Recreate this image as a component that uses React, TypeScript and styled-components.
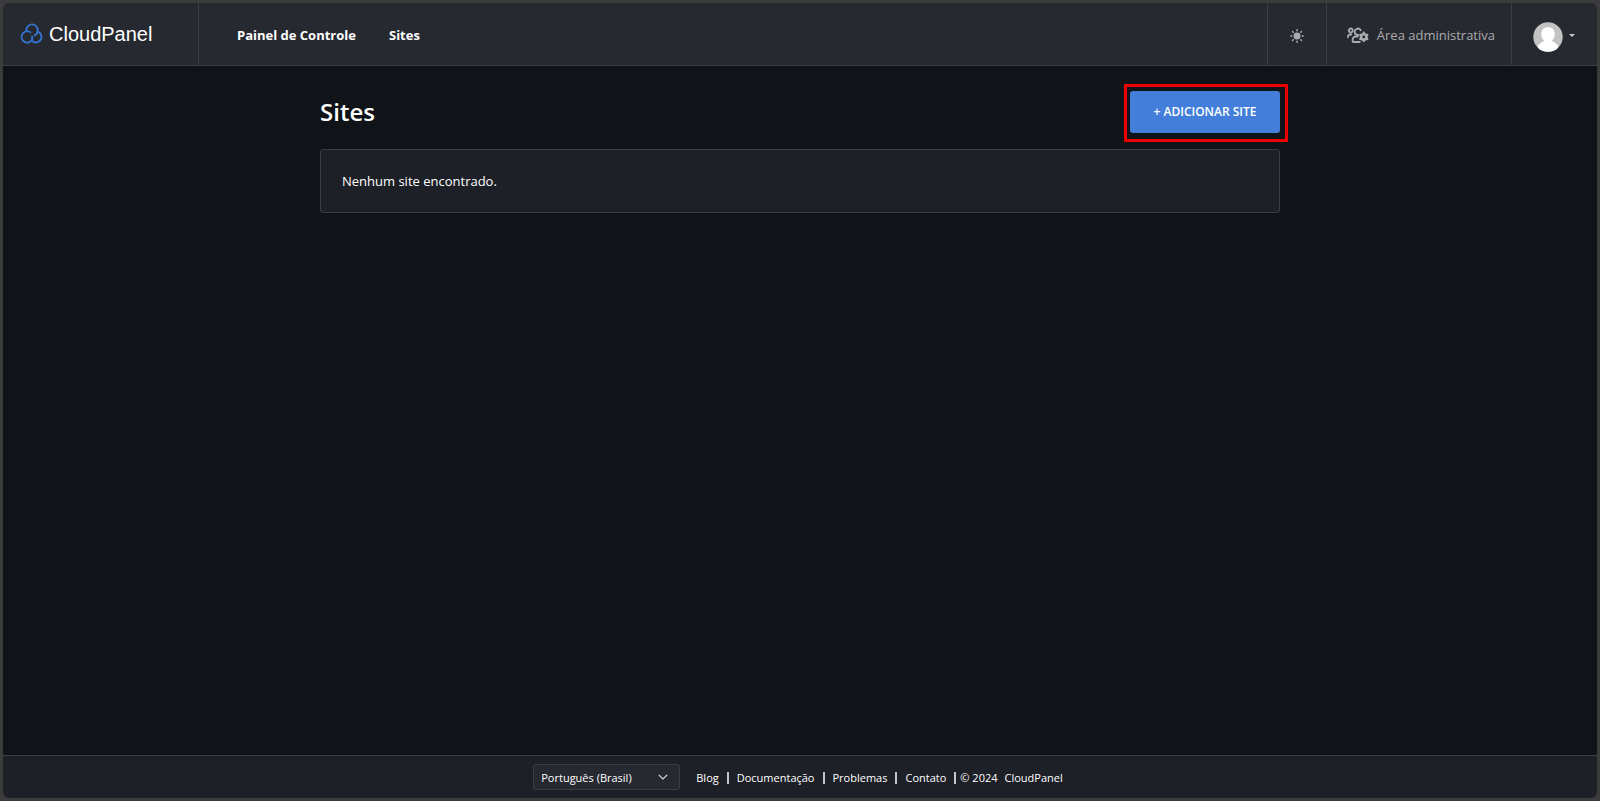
import React from 'react';
import styled, { createGlobalStyle } from 'styled-components';

const color = {
  frame: '#3c3c3c',
  page: '#101317',
  bar: '#272930',
  panel: '#1e2027',
  line: '#3b3e46',
  muted: '#a9abae',
  accent: '#437fda',
  highlight: '#ee0000',
};

const GlobalStyle = createGlobalStyle`
  *, *::before, *::after { box-sizing: border-box; }
  html, body { margin: 0; }
  body {
    background: ${color.frame};
    color: #fff;
    font-family: "Segoe UI", "Open Sans", "Noto Sans", sans-serif;
    font-size: 13px;
    line-height: 20px;
  }
  a { color: inherit; text-decoration: none; }
  h1 { margin: 0; }
`;

const Shell = styled.div`
  min-height: 100vh;
  padding: 3px;
  display: flex;
`;

const AppWindow = styled.div`
  flex: 1;
  display: flex;
  flex-direction: column;
  background: ${color.page};
  border-radius: 7px;
  overflow: hidden;
`;

const Header = styled.header`
  display: flex;
  height: 63px;
  background: ${color.bar};
  border-bottom: 1px solid ${color.line};
`;

const Brand = styled.a`
  display: flex;
  align-items: center;
  gap: 5px;
  width: 196px;
  padding: 0 0 0 17px;
  border-right: 1px solid ${color.line};
  font-family: Arial, "Liberation Sans", sans-serif;
  font-size: 20px;
`;

const Nav = styled.nav`
  flex: 1;
  display: flex;
  align-items: center;
  gap: 33px;
  padding: 2px 38px 0;
`;

const NavLink = styled.a`
  font-weight: 700;
`;

const headerCell = `
  display: flex;
  align-items: center;
  border: 0;
  border-left: 1px solid ${color.line};
  background: transparent;
  color: ${color.muted};
  font: inherit;
`;

const ThemeButton = styled.button`
  ${headerCell}
  justify-content: center;
  width: 59px;
  padding: 4px 0 0;
`;

const AdminLink = styled.a`
  ${headerCell}
  gap: 8px;
  padding: 2px 16px 0 20px;
`;

const UserButton = styled.button`
  ${headerCell}
  gap: 6px;
  width: 86px;
  padding: 5px 0 0 21px;
`;

const Main = styled.main`
  flex: 1;
  width: 100%;
  max-width: 960px;
  margin: 0 auto;
  padding: 25px 0;
`;

const TitleRow = styled.div`
  display: flex;
  align-items: center;
  justify-content: space-between;
  margin-bottom: 16px;
`;

const Title = styled.h1`
  font-size: 24px;
  line-height: 32px;
  font-weight: 600;
  padding-bottom: 1px;
`;

const Highlighted = styled.div`
  position: relative;
  &::after {
    content: '';
    position: absolute;
    inset: -7px -8px -9px -6px;
    border: 3px solid ${color.highlight};
    pointer-events: none;
  }
`;

const AddButton = styled.button`
  display: block;
  width: 150px;
  height: 42px;
  padding: 0;
  border: 0;
  border-radius: 3px;
  background: ${color.accent};
  color: #fff;
  font: inherit;
  font-size: 12px;
  font-weight: 600;
`;

const Card = styled.section`
  padding: 21px;
  border: 1px solid ${color.line};
  border-radius: 3px;
  background: ${color.panel};
`;

const Footer = styled.footer`
  display: flex;
  align-items: center;
  justify-content: center;
  gap: 16px;
  height: 43px;
  padding-right: 4px;
  border-top: 1px solid ${color.line};
  background: ${color.panel};
  font-size: 11px;
  font-weight: 500;
`;

const SelectWrap = styled.div`
  position: relative;
  width: 147px;
  svg {
    position: absolute;
    right: 12px;
    top: 10px;
    pointer-events: none;
  }
`;

const LanguageSelect = styled.select`
  display: block;
  appearance: none;
  width: 100%;
  height: 26px;
  padding: 1px 28px 0 7px;
  border: 1px solid ${color.line};
  border-radius: 3px;
  background: ${color.bar};
  color: #fff;
  font: inherit;
`;

const FooterLinks = styled.nav`
  display: flex;
  align-items: center;
  padding-top: 1px;
`;

const Divider = styled.span`
  width: 2px;
  height: 12px;
  margin: 0 8px;
  background: #c4c5c8;
`;

const Copyright = styled.span`
  display: flex;
  gap: 7px;
  margin-left: -4px;
`;

const CloudLogo = () => (
  <svg width="24" height="22" viewBox="-1 0 24 22" fill="none" stroke="#3274d0" strokeWidth="1.900" strokeLinecap="round" aria-hidden="true">
    <path d="M5.4 8.200V7.100a5.700 5.700 0 0 1 11.400 0c0 2.300-1.100 4.300-3.100 5.300" />
    <path d="M9.300 9.300A5.600 5.600 0 1 0 9.400 18.500C11.200 17.400 11.700 15.400 11 13.400" />
    <path d="M16.600 8.700A5.500 5.500 0 1 1 11.500 18.200" />
  </svg>
);

const SunIcon = () => (
  <svg width="14" height="14" viewBox="0 0 14 14" fill="none" stroke="currentColor" strokeWidth="1.500" strokeLinecap="round" aria-hidden="true">
    <circle cx="7" cy="7" r="3.500" fill="currentColor" stroke="none" />
    <path d="M7 .8v.9M7 12.300v.9M.8 7h.9M12.300 7h.9M2.600 2.600l.6.6M10.800 10.800l.6.6M11.400 2.600l-.6.6M3.200 10.800l-.6.6" />
  </svg>
);

const UsersGearIcon = () => (
  <svg width="22" height="16" viewBox="0 0 22 16" fill="none" stroke="currentColor" strokeWidth="1.800" strokeLinecap="round" aria-hidden="true">
    <circle cx="3.800" cy="3.500" r="2" />
    <path d="M1 10.200V9.400a1.900 1.900 0 0 1 1.900-1.900h1.400" />
    <path d="M13.700 3.200a3.200 3.200 0 1 0-2.500 4.800" />
    <path d="M10.800 9.500H8.800a3.200 3.200 0 0 0-3.200 3.200v1.600c0 .4.300.7.700.7h6.500" />
    <circle cx="16.800" cy="9.900" r="2.700" strokeWidth="2.600" />
    <path d="M16.800 5.700v1M16.800 13.100v1M13.200 7.800l.8.500M19.600 11.500l.8.500M13.200 12l.8-.5M19.600 8.300l.8-.5" strokeWidth="2.200" />
  </svg>
);

const Avatar = () => (
  <svg width="30" height="30" viewBox="0 0 30 30" aria-hidden="true">
    <defs>
      <clipPath id="avatar-clip">
        <circle cx="15" cy="15" r="14.700" />
      </clipPath>
    </defs>
    <g clipPath="url(#avatar-clip)">
      <rect width="30" height="30" fill="#c3c3c3" />
      <path fill="#fff" d="M15 5.300c4.300 0 6.700 2.700 6.700 6.900 0 2.800-1 4.900-2.700 6.300.5 1.200 4.500 2.200 6 5.500V30H5v-6c1.500-3.300 5.500-4.300 6-5.500-1.700-1.400-2.700-3.500-2.700-6.300 0-4.200 2.400-6.900 6.700-6.900z" />
    </g>
  </svg>
);

const Caret = () => (
  <svg width="6" height="8" viewBox="0 0 6 8" aria-hidden="true">
    <path d="M0 1h6L3 4z" fill="#c8c9cb" />
  </svg>
);

const Chevron = () => (
  <svg width="10" height="6" viewBox="0 0 10 6" fill="none" stroke="#dcdcde" strokeWidth="1.200" aria-hidden="true">
    <path d="M.8.8 5 5 9.200.8" />
  </svg>
);

const footerLinks = ['Blog', 'Documentação', 'Problemas', 'Contato'];

export default function App() {
  return (
    <>
      <GlobalStyle />
      <Shell>
        <AppWindow>
          <Header>
            <Brand href="#">
              <CloudLogo />
              CloudPanel
            </Brand>
            <Nav>
              <NavLink href="#">Painel de Controle</NavLink>
              <NavLink href="#">Sites</NavLink>
            </Nav>
            <ThemeButton type="button" aria-label="Tema">
              <SunIcon />
            </ThemeButton>
            <AdminLink href="#">
              <UsersGearIcon />
              Área administrativa
            </AdminLink>
            <UserButton type="button" aria-label="Conta">
              <Avatar />
              <Caret />
            </UserButton>
          </Header>

          <Main>
            <TitleRow>
              <Title>Sites</Title>
              <Highlighted>
                <AddButton type="button">+ ADICIONAR SITE</AddButton>
              </Highlighted>
            </TitleRow>
            <Card>Nenhum site encontrado.</Card>
          </Main>

          <Footer>
            <SelectWrap>
              <LanguageSelect aria-label="Idioma">
                <option>Português (Brasil)</option>
              </LanguageSelect>
              <Chevron />
            </SelectWrap>
            <FooterLinks>
              {footerLinks.map((label) => (
                <React.Fragment key={label}>
                  <a href="#">{label}</a>
                  <Divider />
                </React.Fragment>
              ))}
              <Copyright>
                <span>© 2024</span>
                <a href="#">CloudPanel</a>
              </Copyright>
            </FooterLinks>
          </Footer>
        </AppWindow>
      </Shell>
    </>
  );
}
